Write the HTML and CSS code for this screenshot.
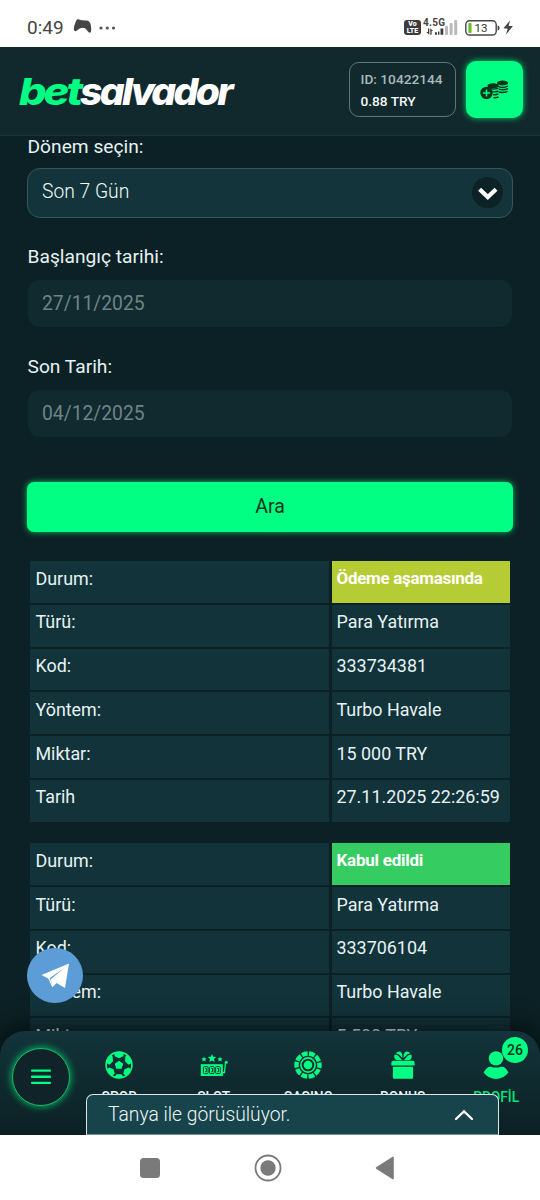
FILE: index.html
```html
<!DOCTYPE html>
<html lang="tr">
<head>
<meta charset="utf-8">
<title>betsalvador</title>
<link rel="stylesheet" href="styles.css">
</head>
<body>
<div class="phone">
  <div class="status">
    <span class="clock">0:49</span>
    <svg class="pad" width="20" height="17" viewBox="0 0 20 17"><path d="M5 1.2Q9 2.6 14 2.4Q17 3 17.8 7Q18.7 13 17.5 14.6Q15.8 15.6 13.8 12Q12.5 9.8 9.5 9.8Q6.5 9.8 4 12.6Q1.5 14 .8 11.8Q.7 8 3 3Q3.8 1 5 1.2Z" fill="#454545"/></svg>
    <svg class="dots" width="17" height="4" viewBox="0 0 17 4" fill="#555"><circle cx="2" cy="2" r="1.6"/><circle cx="8.3" cy="2" r="1.6"/><circle cx="14.5" cy="2" r="1.6"/></svg>
    <span class="volte"><span>Vo</span><span>LTE</span></span>
    <span class="net"><span class="gen">4.5G</span>
      <svg width="18" height="7" viewBox="0 0 18 7" fill="#3c3c3c"><path d="M2 .5h1.3v6.2L.2 4H2zM4.3.3L7.2 3H5.6v3.7H4.3z"/><path d="M9 4.3h2v2.4H9zM12 3.6h1.4v3.1H12zM14.5.5h2.8v6.2h-2.8z"/></svg></span>
    <svg class="bars" width="13" height="15" viewBox="0 0 13 15" fill="#b9b9b9"><rect x="0" y="6" width="3" height="9" rx="1"/><rect x="4.6" y="3" width="3" height="12" rx="1"/><rect x="9.2" y="0" width="3" height="15" rx="1"/></svg>
    <svg class="batt" width="36" height="16" viewBox="0 0 36 16"><rect x=".8" y=".8" width="30.4" height="14.2" rx="3.8" fill="none" stroke="#454545" stroke-width="1.4"/><rect x="3.4" y="3" width="3.2" height="10" rx="1" fill="#65c02c"/><path d="M32.6 5.2q2 .5 2 2.8t-2 2.8z" fill="#454545"/><text x="16" y="12.2" class="pct">13</text></svg>
    <svg class="bolt" width="11" height="15" viewBox="0 0 11 15"><path d="M7.2.3L.4 8.2l4.3.5L2.9 14.5l7-8.2-4.3-.6z" fill="#454545"/></svg>
  </div>

  <header class="header">
    <svg class="logo" width="220" height="44" viewBox="0 0 220 44"><text class="bet" x="4" y="36.5" textLength="61" lengthAdjust="spacingAndGlyphs">bet</text><text class="salv" x="65" y="36.5" textLength="151" lengthAdjust="spacingAndGlyphs">salvador</text></svg>
    <div class="account"><span class="uid">ID: 10422144</span><span class="bal">0.88 TRY</span></div>
    <button class="deposit" aria-label="Para yatır">
      <svg width="29" height="20" viewBox="0 0 29 20"><g fill="none" stroke="#06341c" stroke-width="1.4"><path d="M17.5 4v2.2Q22.5 9 28 6M18.5 8.8Q23 10.8 28 8.6M18.7 12Q23 13.2 27.5 11.3"/><path d="M8 7.2Q12 10.4 18.2 8.2M11 11.3Q15 12.6 18.4 11M13 14.6Q16 15 18.5 13.9M13.5 17.7Q16 18 18.5 17"/></g><g fill="#06341c"><ellipse cx="22.5" cy="3" rx="5.5" ry="2.6"/><ellipse cx="13" cy="5.8" rx="5.6" ry="2.6"/><circle cx="6.5" cy="13" r="6.2"/></g><path d="M6.5 9.4v7.2M2.9 13h7.2" stroke="#00ff82" stroke-width="1.5"/></svg>
    </button>
  </header>

  <main class="content">
    <div class="field">
      <label>Dönem seçin:</label>
      <div class="select"><span>Son 7 Gün</span>
        <span class="drop"><svg width="20" height="14" viewBox="0 0 20 14"><path d="M1.6 2.2l8.2 7.8L18 2.2" fill="none" stroke="#fff" stroke-width="4.2"/></svg></span></div>
    </div>
    <div class="field date"><label>Başlangıç tarihi:</label><div class="input">27/11/2025</div></div>
    <div class="field date"><label>Son Tarih:</label><div class="input">04/12/2025</div></div>
    <button class="search">Ara</button>

    <div class="record">
      <div>Durum:</div><div class="pending">Ödeme aşamasında</div>
      <div>Türü:</div><div>Para Yatırma</div>
      <div>Kod:</div><div>333734381</div>
      <div>Yöntem:</div><div>Turbo Havale</div>
      <div>Miktar:</div><div>15 000 TRY</div>
      <div>Tarih</div><div>27.11.2025 22:26:59</div>
    </div>
    <div class="record">
      <div>Durum:</div><div class="accepted">Kabul edildi</div>
      <div>Türü:</div><div>Para Yatırma</div>
      <div>Kod:</div><div>333706104</div>
      <div>Yöntem:</div><div>Turbo Havale</div>
      <div>Miktar:</div><div>5 500 TRY</div>
    </div>
  </main>

  <div class="telegram"><svg width="29" height="26" viewBox="0 0 29 26"><path d="M.5 12L28 .5 24 25l-8.5-5-4.2 4.4-1-8.3z" fill="#fff"/><path d="M.5 12l7.8 2.8L25 3.8 11.4 17.5l-.2 6.8-3.7-8.6z" fill="#fff"/><path d="M8.8 15L23 5.2 9.8 16.2l1.2 6z" fill="#5c9dd8"/></svg></div>

  <nav class="tabs">
    <div class="menu"><svg width="20" height="16" viewBox="0 0 20 16" fill="#00ff82"><rect y=".5" width="20" height="2.3" rx="1"/><rect y="6.6" width="20" height="2.3" rx="1"/><rect y="12.7" width="20" height="2.3" rx="1"/></svg></div>
    <div class="tab">
      <svg width="28" height="28" viewBox="0 0 28 28"><circle cx="14" cy="14" r="12.9" fill="none" stroke="#00ff82" stroke-width="1.6"/><g fill="#00ff82"><path d="M14 9.7l4.2 3.1-1.6 5h-5.2l-1.6-5z"/><path d="M9 1.8Q14-.2 19 1.8l-.8 3.5L14 7.3 9.8 5.3zM21.8 4Q26 7.5 26.8 12l-3.2 1.8-3.5-3.2.2-4.8zM26 18.2Q24.8 22 21 24.8l-2.7-2 1.2-4.6 4.3-1.6zM6.2 4Q2 7.5 1.2 12l3.2 1.8 3.5-3.2-.2-4.8zM2 18.2Q3.2 22 7 24.8l2.7-2-1.2-4.6-4.3-1.6zM9.5 26l2-2.7h5l2 2.7Q14 27.8 9.5 26z"/></g></svg>
      <span>SPOR</span></div>
    <div class="tab">
      <svg width="28" height="28" viewBox="0 0 28 28" fill="#00ff82"><path d="M12 3l1.2 2.7 3 .3-2.2 2 .6 2.9L12 9.4l-2.6 1.5.6-2.9-2.2-2 3-.3zM4 5.7l.8 1.6 1.8.2-1.3 1.2.3 1.8L4 9.6l-1.6.9.3-1.8-1.3-1.2 1.8-.2zM20 5.7l.8 1.6 1.8.2-1.3 1.2.3 1.8-1.6-.9-1.6.9.3-1.8-1.3-1.2 1.8-.2z"/><path d="M.8 13.2h22v11.8h-22z"/><path d="M22 21.5h2.5l1-10" fill="none" stroke="#00ff82" stroke-width="1.3"/><circle cx="26.3" cy="11.3" r="1.5"/><g fill="none" stroke="#0f2b30" stroke-width=".9"><rect x="3.4" y="15.6" width="4.7" height="7" rx="1"/><rect x="9.5" y="15.6" width="4.7" height="7" rx="1"/><rect x="15.6" y="15.6" width="4.7" height="7" rx="1"/><path d="M5 17.4h1.4v3.4H5M11.1 17.4h1.4v3.4h-1.4M17.2 17.4h1.4v3.4h-1.4"/></g></svg>
      <span>SLOT</span></div>
    <div class="tab">
      <svg width="28" height="28" viewBox="0 0 28 28" fill="none" stroke="#00ff82"><circle cx="14" cy="14" r="11.5" stroke-width="4.4" stroke-dasharray="5.826 1.4" stroke-dashoffset="2.9"/><circle cx="14" cy="14" r="7.1" stroke-width="1.6"/><circle cx="14" cy="14" r="4.3" fill="#00ff82" stroke="none"/></svg>
      <span>CASINO</span></div>
    <div class="tab">
      <svg width="28" height="28" viewBox="0 0 28 28" fill="#00ff82"><path d="M4 9.8h20q1.6 0 1.6 1.6v3.2H2.4v-3.2Q2.4 9.8 4 9.8zM3.9 15.8h20.2v10.6q0 1.3-1.3 1.3H5.2q-1.3 0-1.3-1.3z"/><path d="M13.2 9.3L7.2 9Q4 7 5.8 3.4L9 4.6zM14.8 9.3l6-.3q3.2-2 1.4-5.6L19 4.6zM6.7 2.2Q10.2-.8 12.6 1.8 13.6 3.4 13.4 7L10 3.6zM21.3 2.2Q17.8-.8 15.4 1.8 14.4 3.4 14.6 7L18 3.6z"/></svg>
      <span>BONUS</span></div>
    <div class="tab active">
      <svg width="28" height="28" viewBox="0 0 28 28" fill="#00ff82"><circle cx="14" cy="7.4" r="7.2"/><path d="M1.6 21.4Q5 15 9 15.7q5 1.7 10 0Q23.5 15 26.4 21.4 21.5 27.9 14 27.9T1.6 21.4z"/></svg>
      <span>PROFİL</span><b class="badge">26</b></div>
  </nav>

  <div class="chat"><span>Tanya ile görüsülüyor.</span><svg width="20" height="12" viewBox="0 0 20 12"><path d="M2 10l8-7.6L18 10" fill="none" stroke="#fff" stroke-width="2.3" stroke-linecap="round"/></svg></div>

  <div class="system">
    <svg width="20" height="20"><rect width="20" height="20" rx="3.5" fill="#7a7a7a"/></svg>
    <svg width="28" height="28" viewBox="0 0 28 28"><circle cx="14" cy="14" r="12.5" fill="none" stroke="#7a7a7a" stroke-width="1.8"/><circle cx="14" cy="14" r="7.7" fill="#7a7a7a"/></svg>
    <svg width="20" height="24" viewBox="0 0 20 24"><path d="M1.5 12L18 1.5v21z" fill="#7a7a7a" stroke="#7a7a7a" stroke-width="1.5" stroke-linejoin="round"/></svg>
  </div>
</div>
</body>
</html>
```

FILE: styles.css
```css
* { box-sizing: border-box; }
body { margin: 0; font-family: Roboto, "Liberation Sans", sans-serif; }
button { border: 0; padding: 0; font: inherit; }
svg { display: block; flex: none; }
.phone { position: relative; display: flex; flex-direction: column; width: 540px; height: 1200px; overflow: hidden; background: #0c2125; }

.status { display: flex; align-items: center; flex: none; height: 47px; padding: 8px 27px 0; background: #fff; color: #454545; }
.clock { width: 46px; font-size: 19px; line-height: 20px; }
.pad { margin-top: -2px; }
.dots { margin: 0 auto 0 6px; }
.volte { display: flex; flex-direction: column; align-items: center; width: 17px; height: 15px; padding-top: 1px; border-radius: 3px; background: #3c3c3c; color: #fff; font-size: 7px; font-weight: 900; line-height: 6.5px; }
.net { display: flex; flex-direction: column; width: 20px; margin: -3px 0 0 2px; }
.net svg { margin-left: 3px; }
.gen { height: 10px; font-size: 10px; font-weight: 700; line-height: 9px; letter-spacing: .3px; white-space: nowrap; }
.bars { margin-left: 2px; margin-right: 7px; }
.pct { font-size: 11.5px; font-weight: 400; text-anchor: middle; fill: #333; }
.bolt { margin-left: 2px; margin-right: -1px; }

.header { display: flex; align-items: center; flex: none; height: 88.5px; padding: 0 17px 2px 15px; border-bottom: 1px solid #173238; background: #11282d; }
.logo { margin-right: auto; overflow: visible; }
.bet, .salv { font: italic 800 37.5px Inter, sans-serif; letter-spacing: -2.6px; }
.bet { fill: #00ff82; }
.salv { fill: #fff; }
.account { display: flex; flex-direction: column; justify-content: center; gap: 6px; width: 107px; height: 55px; margin-right: 10.5px; padding-left: 11px; border: 1px solid #5f7679; border-radius: 10px; font-weight: 500; font-size: 13.7px; line-height: 16px; white-space: nowrap; }
.uid { color: #a9babd; }
.bal { color: #f3f8f8; }
.deposit { display: flex; align-items: center; justify-content: center; width: 57px; height: 57px; border-radius: 10px; background: #00ff82; box-shadow: 0 0 6px #00d96f; }

.content { flex: 1; min-height: 0; padding: 0 27px; overflow: hidden; color: #e6f2f3; }
.field { height: 110px; }
.field label { display: block; height: 32px; padding-left: .5px; font-size: 19.2px; line-height: 22px; }
.select { display: flex; align-items: center; justify-content: space-between; height: 50px; padding: 0 9px 3px 14px; border: 1px solid #35575b; border-radius: 13px; background: #12343a; font-size: 19.3px; font-weight: 300; color: #f2fafa; }
.drop { display: flex; align-items: center; justify-content: center; width: 31px; height: 31px; padding-top: 3px; margin-top: 3px; border-radius: 50%; background: #0c2226; }
.input { height: 47px; margin: 2px 1.5px 0 1px; padding: 0 14px; border-radius: 12px; background: #112a2f; color: #6f8386; font-size: 19.3px; line-height: 47px; }
.search { display: block; width: 100%; height: 50px; margin-top: 16px; border-radius: 7px; background: #00ff82; box-shadow: 0 0 6px #00c968; color: #06341c; font-size: 19.5px; line-height: 50px; }
.record { display: grid; grid-template-columns: 299px 178.5px; grid-auto-rows: 41.8px; gap: 2px 2.5px; margin: 29.5px 3px 0; font-size: 17.9px; line-height: 22px; }
.record + .record { margin-top: 21.5px; }
.record div { padding: 6.5px 5.5px; background: #12333a; white-space: nowrap; }
.record div:nth-child(even) { padding-left: 5px; }
.record .pending { background: #b5cc35; color: #fff; font-weight: 700; font-size: 17px; letter-spacing: -.3px; line-height: 21px; }
.record .accepted { background: #35cc62; color: #fff; font-weight: 700; font-size: 17px; letter-spacing: -.25px; line-height: 21px; }

.telegram { position: absolute; left: 27px; top: 948px; z-index: 1; display: flex; align-items: center; justify-content: center; width: 56px; height: 55px; border-radius: 50%; background: #5c9dd8; }
.tabs { position: absolute; left: 0; right: 0; bottom: 65px; display: flex; height: 104px; padding: 0 0 0 12px; border-radius: 25px 25px 0 0; background: linear-gradient(#12343a, #0c2024); box-shadow: 0 0 26px 4px rgba(0, 0, 0, .65); }
.menu { display: flex; align-items: center; justify-content: center; flex: none; width: 58px; height: 58px; margin: 17px 2px 0 0; border: 1.5px solid #16b867; border-radius: 50%; background: #0f2328; box-shadow: 0 0 7px 1px #00b05f; }
.tab { position: relative; display: flex; flex-direction: column; align-items: center; flex: none; width: 94.5px; padding-top: 20px; color: #e6f2f3; font-size: 13.8px; font-weight: 500; line-height: 16px; }
.tab span { margin-top: 10px; }
.tab.active { left: -1px; }
.active span { color: #00e577; }
.badge { position: absolute; left: 53px; top: 6px; width: 26px; height: 26px; border-radius: 50%; background: #00ff82; color: #06341c; font-size: 14px; font-weight: 500; line-height: 26px; text-align: center; }
.chat { position: absolute; left: 86px; top: 1094px; display: flex; align-items: center; justify-content: space-between; width: 412.5px; height: 41px; padding: 0 24px 0 21px; border: 1px solid #dbe7e8; border-bottom-color: #6f9296; border-radius: 7px 7px 0 0; background: #17434a; color: #eef6f6; font-size: 19.3px; font-weight: 300; }
.system { position: relative; display: flex; align-items: center; justify-content: space-between; flex: none; height: 65px; padding: 0 145px 0 140px; background: #fff; }
```
